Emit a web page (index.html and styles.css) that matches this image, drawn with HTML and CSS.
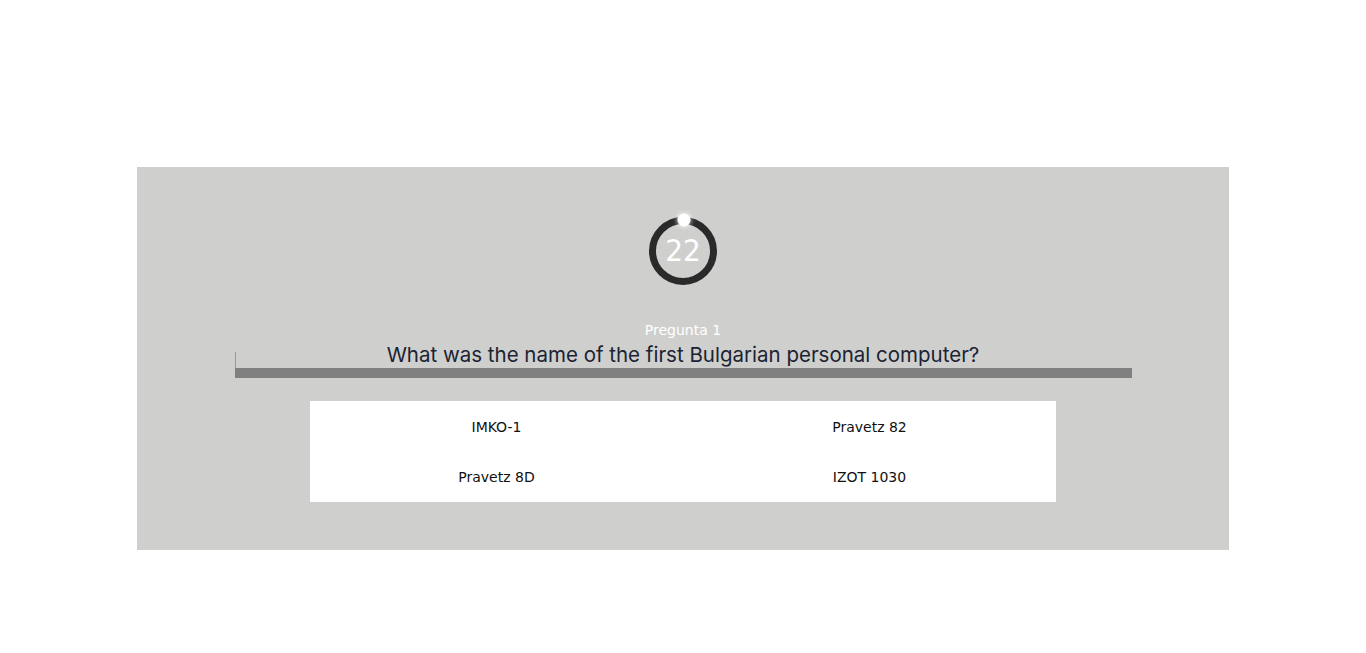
FILE: index.html
```html
<!DOCTYPE html>
<html lang="es">
<head>
<meta charset="utf-8">
<title>Quiz</title>
<link rel="stylesheet" href="styles.css">
</head>
<body>
<main class="panel">
  <div class="timer">
    <svg class="timer-svg" width="80" height="80" viewBox="0 0 80 80">
      <defs>
        <filter id="glow" x="-100%" y="-100%" width="300%" height="300%">
          <feGaussianBlur stdDeviation="2.5" result="b"/>
          <feMerge><feMergeNode in="b"/><feMergeNode in="SourceGraphic"/></feMerge>
        </filter>
      </defs>
      <circle cx="40" cy="41" r="30.5" fill="none" stroke="#2a2a2a" stroke-width="7"/>
      <circle cx="41" cy="10" r="6.5" fill="#ffffff" filter="url(#glow)"/>
    </svg>
    <span class="timer-num">22</span>
  </div>
  <div class="label">Pregunta 1</div>
  <div class="question">What was the name of the first Bulgarian personal computer?</div>
  <div class="track"></div>
  <div class="answers">
    <div class="answer">IMKO-1</div>
    <div class="answer">Pravetz 82</div>
    <div class="answer">Pravetz 8D</div>
    <div class="answer">IZOT 1030</div>
  </div>
</main>
</body>
</html>
```
FILE: styles.css
```css
html, body {
  margin: 0;
  padding: 0;
  background: #ffffff;
}

.panel {
  width: 1092px;
  margin: 167px auto 0;
  background: #cfd0ce;
  display: flex;
  flex-direction: column;
  align-items: center;
  padding: 43px 0 48px;
  box-sizing: border-box;
  height: 383px;
}

.timer {
  position: relative;
  width: 80px;
  height: 80px;
}

.timer-svg {
  display: block;
}

.timer-num {
  position: absolute;
  left: 0;
  right: 0;
  top: 22px;
  text-align: center;
  font-family: "DejaVu Sans Condensed", "DejaVu Sans", sans-serif;
  font-size: 31px;
  line-height: 36px;
  color: #ffffff;
}

.label {
  margin-top: 32px;
  font-family: "DejaVu Sans", sans-serif;
  font-size: 14px;
  line-height: 17px;
  color: #ffffff;
}

.question {
  margin-top: 3px;
  font-family: Inter, sans-serif;
  font-size: 20.5px;
  line-height: 26px;
  color: #1c2333;
}

.track {
  position: relative;
  width: 897px;
  height: 10px;
  background: #808080;
}

.track::before {
  content: "";
  position: absolute;
  left: 0;
  bottom: 10px;
  width: 1px;
  height: 16px;
  background: #9a9a9a;
}

.answers {
  margin-top: 23px;
  width: 746px;
  background: #ffffff;
  display: grid;
  grid-template-columns: 1fr 1fr;
  grid-auto-rows: 50px;
  padding: 1px 0 0;
}

.answer {
  display: flex;
  align-items: center;
  justify-content: center;
  font-family: "DejaVu Sans", sans-serif;
  font-size: 14px;
  color: #111111;
}
```
